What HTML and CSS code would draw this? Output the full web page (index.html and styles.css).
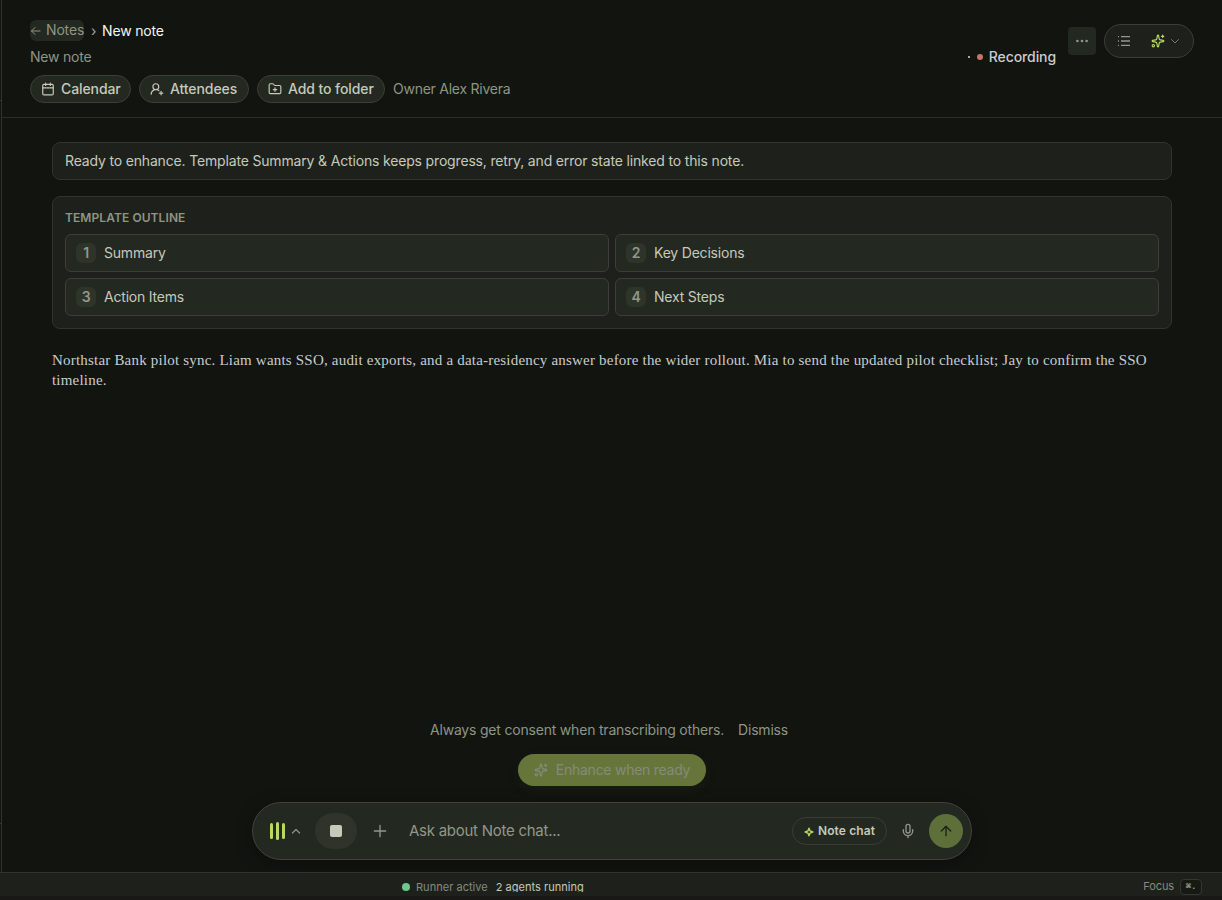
FILE: index.html
```html
<!DOCTYPE html>
<html lang="en">
<head>
<meta charset="utf-8">
<title>New note</title>
<link rel="stylesheet" href="styles.css">
</head>
<body>
<svg class="defs" aria-hidden="true">
  <symbol id="sparkles" viewBox="0 0 24 24"><path d="M11.017 2.814a1 1 0 0 1 1.966 0l1.051 5.558a2 2 0 0 0 1.594 1.594l5.558 1.051a1 1 0 0 1 0 1.966l-5.558 1.051a2 2 0 0 0-1.594 1.594l-1.051 5.558a1 1 0 0 1-1.966 0l-1.051-5.558a2 2 0 0 0-1.594-1.594l-5.558-1.051a1 1 0 0 1 0-1.966l5.558-1.051a2 2 0 0 0 1.594-1.594z"/><path d="M20 2v4M22 4h-4"/><circle cx="4" cy="20" r="2"/></symbol>
</svg>
<div class="app">
  <div class="workspace">
    <aside class="rail"><span class="rail-mark"></span><span class="rail-mark"></span></aside>
    <main class="pane">
      <header class="header">
        <div class="heading">
          <nav class="crumbs">
            <a class="back"><svg class="icon" width="12" height="12" viewBox="0 0 24 24"><path d="m10 19-7-7 7-7M20 12H3"/></svg><span>Notes</span></a>
            <span class="sep">›</span>
            <span class="current">New note</span>
          </nav>
          <div class="title">New note</div>
          <div class="chips">
            <button class="chip"><svg class="icon" width="14" height="14" viewBox="0 0 24 24"><path d="M8 2v4M16 2v4M3 10h18"/><rect x="3" y="4" width="18" height="18" rx="2"/></svg><span>Calendar</span></button>
            <button class="chip"><svg class="icon" width="14" height="14" viewBox="0 0 24 24"><path d="M2 21a8 8 0 0 1 13.292-6"/><circle cx="10" cy="8" r="5"/><path d="M19 16v6M22 19h-6"/></svg><span>Attendees</span></button>
            <button class="chip"><svg class="icon" width="14" height="14" viewBox="0 0 24 24"><path d="M12 10v6M9 13h6"/><path d="M20 20a2 2 0 0 0 2-2V8a2 2 0 0 0-2-2h-7.900a2 2 0 0 1-1.690-.900L9.600 3.900A2 2 0 0 0 7.930 3H4a2 2 0 0 0-2 2v13a2 2 0 0 0 2 2Z"/></svg><span>Add to folder</span></button>
            <span class="owner">Owner Alex Rivera</span>
          </div>
        </div>
        <div class="tools">
          <div class="recording"><i class="tick"></i><i class="rec-dot"></i><span>Recording</span></div>
          <button class="more"><svg width="14" height="14" viewBox="0 0 14 14" fill="currentColor"><circle cx="2.400" cy="7" r="1.300"/><circle cx="7" cy="7" r="1.300"/><circle cx="11.600" cy="7" r="1.300"/></svg></button>
          <div class="switch">
            <svg width="14" height="14" viewBox="0 0 14 14" fill="currentColor"><path d="M1 2h1v1.300H1zM1 6.350h1v1.300H1zM1 10.700h1V12H1zM4 2h9v1.300H4zM4 6.350h9v1.300H4zM4 10.700h9V12H4z"/></svg>
            <span class="magic"><svg class="icon lime" width="14" height="14"><use href="#sparkles"/></svg><svg class="icon dim" width="12" height="12" viewBox="0 0 24 24"><path d="m5 9 7 7 7-7"/></svg></span>
          </div>
        </div>
      </header>
      <section class="content">
        <div class="notice">Ready to enhance. Template Summary &amp; Actions keeps progress, retry, and error state linked to this note.</div>
        <div class="outline">
          <h2>TEMPLATE OUTLINE</h2>
          <div class="grid">
            <div class="item"><b>1</b><span>Summary</span></div>
            <div class="item"><b>2</b><span>Key Decisions</span></div>
            <div class="item"><b>3</b><span>Action Items</span></div>
            <div class="item"><b>4</b><span>Next Steps</span></div>
          </div>
        </div>
        <p class="note">Northstar Bank pilot sync. Liam wants SSO, audit exports, and a data-residency answer before the wider rollout. Mia to send the updated pilot checklist; Jay to confirm the SSO timeline.</p>
      </section>
      <section class="dock">
        <div class="consent"><span>Always get consent when transcribing others.</span><a>Dismiss</a></div>
        <button class="enhance"><svg class="icon" width="14" height="14"><use href="#sparkles"/></svg><span>Enhance when ready</span></button>
        <div class="composer">
          <span class="meter"><i></i><i></i><i></i></span>
          <svg class="icon caret" width="12" height="12" viewBox="0 0 24 24"><path d="m5 16 7-7 7 7"/></svg>
          <button class="stop"><i></i></button>
          <svg class="icon plus" width="16" height="16" viewBox="0 0 24 24"><path d="M3.500 12h17M12 3.500v17"/></svg>
          <span class="prompt">Ask about Note chat...</span>
          <button class="mode"><svg width="10" height="10" viewBox="0 0 10 10" fill="none" stroke="currentColor" stroke-width="1.400" stroke-linejoin="round"><path d="M5 1.200 6.100 3.900 8.800 5 6.100 6.100 5 8.800 3.900 6.100 1.200 5 3.900 3.900Z"/></svg><span>Note chat</span></button>
          <svg class="icon mic" width="16" height="16" viewBox="0 0 24 24"><path d="M12 19v3M19 10v2a7 7 0 0 1-14 0v-2"/><rect x="9" y="2" width="6" height="13" rx="3"/></svg>
          <button class="send"><svg class="icon" width="16" height="16" viewBox="0 0 24 24"><path d="m5 12 7-7 7 7M12 19V5"/></svg></button>
        </div>
      </section>
    </main>
  </div>
  <footer class="status">
    <div class="runner"><i></i><span>Runner active</span><span class="agents">2 agents running</span></div>
    <div class="focus"><span>Focus</span><kbd>⌘.</kbd></div>
  </footer>
</div>
</body>
</html>
```
FILE: styles.css
```css
* { box-sizing: border-box; }
body { margin: 0; background: #1a1816; color: #c5cabb; font: 14px/20px Inter, "Liberation Sans", sans-serif; letter-spacing: -.165px; overflow: hidden; }
button { font: inherit; letter-spacing: inherit; color: inherit; border: 0; padding: 0; margin: 0; background: none; white-space: nowrap; }
svg, i { display: block; flex: none; }
.defs { position: absolute; width: 0; height: 0; }
.icon { fill: none; stroke: currentColor; stroke-width: 2; stroke-linecap: round; stroke-linejoin: round; }
.app { height: 900px; display: flex; flex-direction: column; }
.workspace { height: 872px; display: flex; background: #11140f; }
.rail { width: 1px; display: flex; flex-direction: column; justify-content: space-between; padding: 100px 0 48px; }
.rail-mark { height: 1px; background: #343832; }
.pane { flex: 1; border-left: 1px solid #30332e; display: flex; flex-direction: column; }
.header { height: 118px; border-bottom: 1px solid #2a2d28; padding: 20px 28px 0; display: flex; justify-content: space-between; }
.crumbs { display: flex; height: 21px; }
.back { width: 54px; height: 21px; display: flex; align-items: center; gap: 4px; background: #232820; border-radius: 6px; color: #8f9485; }
.back span { margin-top: -1px; }
.sep { width: 18px; text-align: center; color: #a5aa9b; padding: 1px 0 0 1px; }
.current { color: #f4f6ef; padding-top: 1px; }
.title { color: #8f9485; margin-top: 6px; letter-spacing: -.22px; }
.chips { display: flex; gap: 8px; margin-top: 8px; align-items: center; }
.chip { height: 28px; border: 1px solid #3b3f37; border-radius: 14px; background: #232820; padding: 0 10px; display: flex; align-items: center; gap: 6px; font-weight: 500; letter-spacing: -.09px; }
.chip:first-child { width: 101px; }
.chip:nth-child(2) { width: 110px; }
.chip:nth-child(3) { width: 128px; }
.owner { color: #8f9485; letter-spacing: -.25px; }
.tools { display: flex; }
.recording { display: flex; height: 20px; margin-top: 27px; align-items: center; font-weight: 500; letter-spacing: -.1px; color: #c9ccd0; }
.tick { width: 2px; height: 2px; background: #a6a9a4; margin-right: 7px; }
.rec-dot { width: 6px; height: 6px; border-radius: 50%; background: #cb7465; margin-right: 6px; }
.more { width: 28px; height: 28px; margin: 7px 8px 0 12px; border-radius: 4px; background: #232820; display: grid; place-items: center; color: #92978a; }
.switch { width: 90px; height: 34px; margin-top: 4px; border: 1px solid #3b3f37; border-radius: 17px; background: #1e211b; padding: 0 12px; display: flex; align-items: center; justify-content: space-between; color: #92978a; }
.magic { display: flex; align-items: center; gap: 4px; }
.lime { color: #b8d963; }
.dim { color: #747a6c; }
.content { padding: 24px 50px 0; flex: 1; }
.notice { height: 38px; border: 1px solid #30342d; border-radius: 8px; background: #1e211b; padding: 8px 12px; }
.outline { height: 133px; margin-top: 16px; border: 1px solid #30342d; border-radius: 8px; background: #1e211b; padding: 12px; }
h2 { margin: 0; font-size: 12px; font-weight: 600; line-height: 18px; color: #8f9485; letter-spacing: .08px; }
.grid { display: grid; grid-template-columns: 1fr 1fr; gap: 6px; margin-top: 7px; }
.item { height: 38px; border: 1px solid #3b3f37; border-radius: 6px; background: #232820; padding: 0 10px; display: flex; align-items: center; gap: 8px; letter-spacing: -.2px; }
.item b { width: 20px; height: 20px; border-radius: 6px; background: #2f342b; color: #92978a; font-size: 14px; font-weight: 600; text-align: center; }
.note { margin: 21px 0 0; font: 15px/20px "Liberation Serif", serif; letter-spacing: .2px; color: #c9ccd0; }
.dock { display: flex; flex-direction: column; align-items: center; padding-bottom: 12px; }
.consent { display: flex; gap: 14px; color: #8f9485; margin-right: 6px; letter-spacing: -.2px; }
.enhance { width: 188px; height: 32px; margin: 14px 0 16px; border-radius: 16px; background: #66763a; color: #858a7c; display: flex; align-items: center; justify-content: center; gap: 8px; letter-spacing: -.26px; box-shadow: 0 4px 16px rgba(184,217,99,.05); }
.composer { width: 720px; height: 58px; border: 1px solid #3f433b; border-radius: 29px; background: #232820; display: flex; align-items: center; padding: 0 8px 0 17px; box-shadow: 0 4px 18px rgba(0,0,0,.3); color: #92978a; }
.meter { display: flex; align-items: center; gap: 3px; }
.meter i { width: 3px; height: 16px; border-radius: 1.5px; background: #b8d963; }
.meter i:nth-child(2) { height: 18px; }
.caret { margin-left: 5px; stroke-width: 2.4; }
.stop { width: 42px; height: 36px; border-radius: 18px; background: #2f342b; margin-left: 13px; display: grid; place-items: center; }
.stop i { width: 12px; height: 12px; border-radius: 2px; background: #c5cabb; }
.plus { margin-left: 15px; }
.prompt { margin-left: 21px; flex: 1; font-size: 15px; letter-spacing: -.26px; }
.mode { width: 95px; height: 28px; border: 1px solid #393e35; border-radius: 14px; display: flex; align-items: center; justify-content: center; gap: 4px; font-size: 12px; font-weight: 600; letter-spacing: .1px; color: #c5cabb; }
.mode svg { color: #b8d963; margin-top: 2px; }
.mic { margin: 0 13px; }
.send { width: 34px; height: 34px; border-radius: 50%; background: #5f6f3a; color: #1c2116; display: grid; place-items: center; }
.status { height: 24px; border-top: 1px solid #30342d; background: #1e211b; display: flex; justify-content: space-between; font-size: 11px; line-height: 15px; letter-spacing: .03px; color: #858a7c; padding: 6px 20px 0 402px; }
.runner { display: flex; height: 15px; }
.runner i { width: 8px; height: 8px; border-radius: 50%; background: #70c68c; margin: 4px 6px 0 0; }
.runner span { padding-top: 1px; }
.agents { margin-left: 8px; color: #c5cabb; height: 13px; overflow: hidden; }
.focus { display: flex; gap: 6px; letter-spacing: -.1px; }
kbd { width: 22px; height: 16px; border: 1px solid #33372f; border-radius: 4px; background: #171a14; font: bold 9px/14px "Liberation Mono", "DejaVu Sans Mono", monospace; text-align: center; color: #a5aa9b; }
```
